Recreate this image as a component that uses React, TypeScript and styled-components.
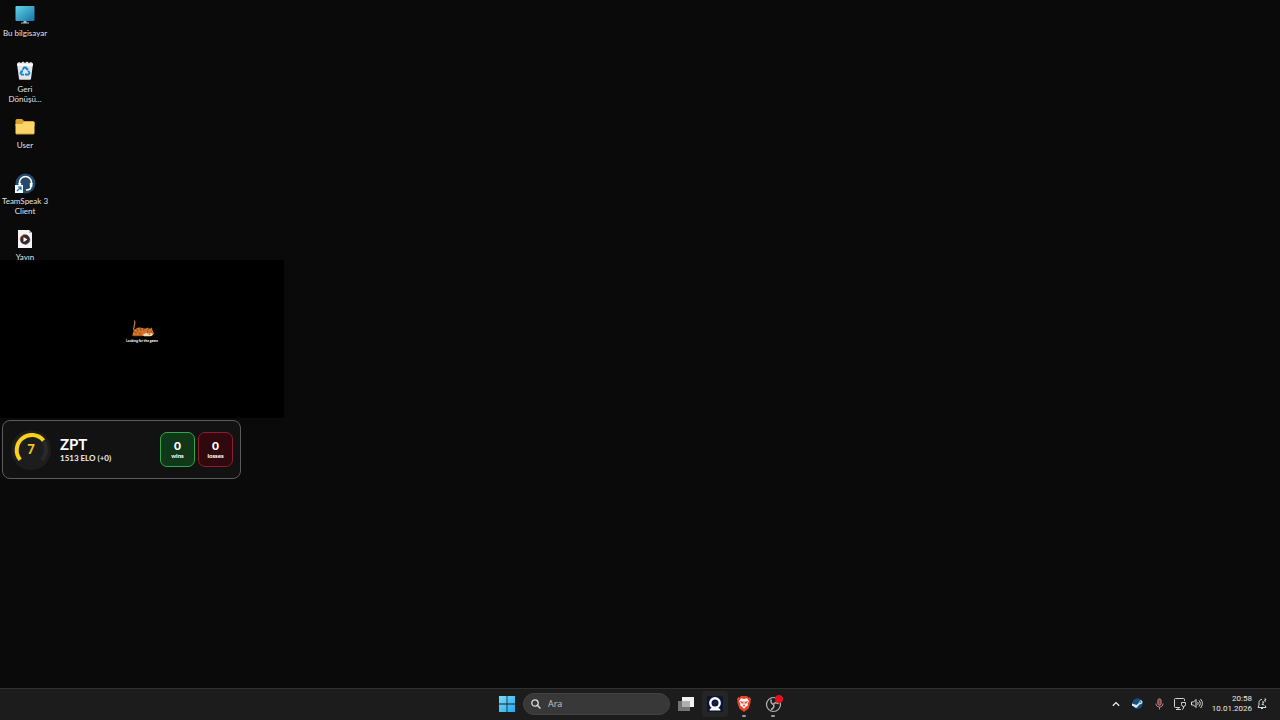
import React, { ReactNode } from "react";
import styled, { createGlobalStyle } from "styled-components";

const GlobalStyle = createGlobalStyle`
  * { box-sizing: border-box; }
  body {
    margin: 0;
    background: #0a0a0a;
    color: #fff;
    font-family: "Open Sans", "Noto Sans", sans-serif;
  }
  button { border: 0; padding: 0; margin: 0; background: none; color: inherit; font: inherit; }
  svg { display: block; }
`;

const Screen = styled.div`
  display: flex;
  flex-direction: column;
  min-height: 100vh;
`;

const Desktop = styled.main`
  position: relative;
  flex: 1;
  overflow: hidden;
`;

const ShortcutList = styled.nav`
  display: flex;
  flex-direction: column;
  width: 50px;
  padding-top: 4px;
`;

const Shortcut = styled.button`
  display: flex;
  flex-direction: column;
  align-items: center;
  gap: 4px;
  height: 56px;
  font-size: 8px;
  line-height: 10px;
  color: #e6e6e6;
  font-family: Lato, "Noto Sans", sans-serif;
`;

const ShortcutLabel = styled.span`
  width: 48px;
  text-align: center;
  text-shadow: 0 1px 1px #000;
`;

const CaptureWindow = styled.section`
  position: absolute;
  left: 0;
  top: 260px;
  width: 284px;
  height: 158px;
  display: flex;
  flex-direction: column;
  align-items: center;
  justify-content: center;
  padding-bottom: 14px;
  background: #000;
`;

const CaptureCaption = styled.p`
  margin: 0;
  font-size: 3px;
  line-height: 6px;
  font-weight: 700;
  white-space: nowrap;
`;

const RankCard = styled.section`
  position: absolute;
  left: 2px;
  top: 420px;
  width: 239px;
  height: 59px;
  display: flex;
  align-items: center;
  gap: 8px;
  padding: 0 7px;
  border: 1px solid #5c5c5c;
  border-radius: 8px;
  background: #121212;
  font-family: Lato, sans-serif;
`;

const PlayerInfo = styled.div`
  flex: 1;
  white-space: nowrap;
`;

const PlayerName = styled.h1`
  margin: 0;
  font-size: 15px;
  line-height: 16px;
  font-weight: 700;
`;

const PlayerElo = styled.p`
  margin: 0;
  font-size: 8px;
  line-height: 12px;
  font-weight: 700;
  color: #eee;
`;

const Scores = styled.div`
  display: flex;
  gap: 3px;
`;

const Score = styled.div<{ $line: string; $fill: string }>`
  display: flex;
  flex-direction: column;
  align-items: center;
  justify-content: center;
  width: 35px;
  height: 35px;
  border: 1px solid ${(p) => p.$line};
  border-radius: 7px;
  background: ${(p) => p.$fill};
  font-weight: 900;
`;

const ScoreValue = styled.span`
  font-size: 12px;
  line-height: 12px;
`;

const ScoreLabel = styled.span`
  font-size: 6px;
  line-height: 8px;
`;

const Taskbar = styled.footer`
  display: grid;
  grid-template-columns: 1fr auto 1fr;
  align-items: center;
  height: 32px;
  padding-bottom: 2px;
  border-top: 1px solid #303030;
  background: #1c1c1c;
`;

const Pinned = styled.div`
  grid-column: 2;
  display: flex;
  align-items: center;
  gap: 3px;
`;

const PinnedButton = styled.button<{ $active?: boolean; $running?: boolean }>`
  position: relative;
  display: flex;
  align-items: center;
  justify-content: center;
  width: 26px;
  height: 26px;
  border-radius: 3px;
  background: ${(p) => (p.$active ? "#252525" : "transparent")};
  &::after {
    content: "";
    display: ${(p) => (p.$running ? "block" : "none")};
    position: absolute;
    bottom: 0;
    width: 4px;
    height: 2px;
    border-radius: 1px;
    background: #9c9c9c;
  }
`;

const SearchBox = styled.label`
  display: flex;
  align-items: center;
  gap: 7px;
  width: 147px;
  height: 22px;
  padding: 0 7px;
  border: 1px solid #434343;
  border-radius: 11px;
  background: #383838;
`;

const SearchInput = styled.input`
  flex: 1;
  min-width: 0;
  padding: 0;
  border: 0;
  outline: 0;
  background: none;
  color: #d0d0d0;
  font: 9px/14px "Open Sans", sans-serif;
  &::placeholder { color: #c4c4c4; opacity: 1; }
`;

const Tray = styled.div`
  display: flex;
  align-items: center;
  justify-content: flex-end;
  padding-right: 12px;
`;

const TrayButton = styled.button<{ $width: number }>`
  display: flex;
  align-items: center;
  justify-content: center;
  width: ${(p) => p.$width}px;
  height: 26px;
`;

const Clock = styled.button`
  display: flex;
  flex-direction: column;
  align-items: flex-end;
  width: 48px;
  margin-right: 4px;
  font-family: Roboto, sans-serif;
  font-size: 8px;
  line-height: 10px;
  color: #e8e8e8;
  white-space: nowrap;
`;

const MonitorIcon = () => (
  <svg width="20" height="20" viewBox="0 0 20 20">
    <defs>
      <linearGradient id="monitor" x1="0" y1="0" x2="1" y2="1">
        <stop offset="0" stopColor="#62d3e8" />
        <stop offset="1" stopColor="#1474a9" />
      </linearGradient>
    </defs>
    <rect x=".5" y="2" width="19" height="15" rx="1" fill="url(#monitor)" />
    <path d="M8.500 17h3v1.500H14v1H6v-1h2.500z" fill="#a9bcc4" />
  </svg>
);

const RecycleIcon = () => (
  <svg width="20" height="20" viewBox="0 0 20 20">
    <path d="M2 3.500 4 2l2 1 2-1.500 2 1.500 2-1.500L14 3l2-1 2 1.500-2 15.500a1 1 0 0 1-1 .8H5a1 1 0 0 1-1-.8z" fill="#e4e7e9" />
    <path d="M2 4h16l-.3 2H2.300z" fill="#fafafa" />
    <g fill="none" stroke="#1683cd" strokeWidth="1.800">
      <path d="m7.600 9.800 1.500-2.300h1.800l1.200 1.900" />
      <path d="m13.300 10.700 1.200 2.200-1 1.800h-2.300" />
      <path d="M9 14.700H6.600l-1-1.800 1-1.700" />
    </g>
    <path d="m13.400 7.800-.3 3-2.600-1.200zM11.500 12.700v3.600l-2-1.700zM5 10.500l2.800-.2.300 2.700z" fill="#1683cd" />
  </svg>
);

const FolderIcon = () => (
  <svg width="20" height="20" viewBox="0 0 20 20">
    <path d="M.5 4.500A1.500 1.500 0 0 1 2 3h5l2 2h9a1.500 1.500 0 0 1 1.500 1.500V10H.5z" fill="#dba22d" />
    <path d="M.5 8H7l2-2h10.500v11a1.200 1.200 0 0 1-1.200 1.200H1.700A1.200 1.200 0 0 1 .5 17z" fill="#fbd568" />
    <path d="M1 17.700h18" stroke="#e6b344" />
  </svg>
);

const HeadsetIcon = () => (
  <svg width="22" height="20" viewBox="0 0 22 20" overflow="visible">
    <circle cx="11.500" cy="11.500" r="10" fill="#25496b" />
    <path d="M5.500 12v-1.500a6 6 0 0 1 12 0V12" fill="none" stroke="#fff" strokeWidth="1.600" />
    <path d="M4.500 11h2.700v4H5.500a1 1 0 0 1-1-1zM15.800 11h2.700v3a1 1 0 0 1-1 1h-1.700z" fill="#fff" />
    <path d="M17 14.500c0 2-2 3.500-5 3.500" fill="none" stroke="#fff" strokeWidth="1.500" />
    <rect x="1" y="13" width="8" height="8" fill="#f7fbff" />
    <path d="m3 19 4-4M4 15h3v3" fill="none" stroke="#1675b8" strokeWidth="1.200" />
  </svg>
);

const VideoFileIcon = () => (
  <svg width="20" height="20" viewBox="0 0 20 20">
    <path d="M3 2h11l3 3v15H3z" fill="#f5f5f5" />
    <path d="M14 2v3h3z" fill="#b8b8b8" />
    <circle cx="10" cy="11.500" r="4.900" fill="#34292f" />
    <path d="M5.100 11.500a4.900 4.900 0 0 1 4.900-4.900" fill="none" stroke="#d6643b" strokeWidth="1" />
    <path d="M10 16.400a4.900 4.900 0 0 0 4.900-4.900" fill="none" stroke="#745587" strokeWidth="1" />
    <path d="m8.500 9 4 2.500-4 2.500z" fill="#fff" />
  </svg>
);

const TigerDrawing = () => (
  <svg width="24" height="18" viewBox="0 0 24 18" overflow="visible">
    <path d="M4.500 11C1.500 7 6.500 5.500 4.500 1" fill="none" stroke="#b9784c" strokeWidth="1.300" strokeLinecap="round" />
    <path d="M2.500 16c0-4 2.500-8 6.500-8.500 3-.3 5 1.500 7 1l1.500-1 1 1h2l1.500-1 .5 3 1.500 3-2 2.500H12z" fill="#d3742a" />
    <path d="M7 9l1 2.500M10.500 8l.5 3m2.500-2.500.5 2M4.500 12l2.500 1m2 0 2 1m7-5v1.500" stroke="#70350f" strokeWidth=".7" />
    <path d="m13 14.500 3-1.500 2.500.7L21 13l2 1.500-2.500 1.700H14z" fill="#f5dcb8" />
    <path d="M17 11.800h1m2.500 0h1m-2.800 2.400h1.500" stroke="#5b2a12" strokeWidth=".8" />
    <path d="M3 15.800h9" stroke="#8a4717" strokeWidth=".8" />
  </svg>
);

const LevelGauge = () => (
  <svg width="42" height="42" viewBox="0 0 42 42" role="img" aria-label="Level 7">
    <circle cx="21" cy="21" r="20" fill="#1d1d1e" />
    <path d="M10.200 30.800A15 15 0 1 1 31.800 30.800" fill="none" stroke="#29292b" strokeWidth="4" />
    <path d="M10.200 30.800A15 15 0 0 1 33.500 11.500" fill="none" stroke="#fbd119" strokeWidth="4" />
    <text x="21" y="25" textAnchor="middle" fill="#f0c51d" fontFamily="Lato, sans-serif" fontSize="13" fontWeight="900">7</text>
  </svg>
);

const WindowsIcon = () => (
  <svg width="16" height="16" viewBox="0 0 16 16">
    <defs>
      <linearGradient id="win" x1="0" y1="0" x2="1" y2="1">
        <stop offset="0" stopColor="#79dcfa" />
        <stop offset="1" stopColor="#20a7ef" />
      </linearGradient>
    </defs>
    <path d="M0 0h7.600v7.600H0zM8.400 0H16v7.600H8.400zM0 8.400h7.600V16H0zM8.400 8.400H16V16H8.400z" fill="url(#win)" />
  </svg>
);

const SearchIcon = () => (
  <svg width="10" height="10" viewBox="0 0 10 10" fill="none" stroke="#dedede" strokeWidth="1.300">
    <circle cx="4" cy="4" r="3.200" />
    <path d="m6.300 6.300 3.200 3.200" />
  </svg>
);

const TaskViewIcon = () => (
  <svg width="16" height="16" viewBox="0 0 16 16">
    <rect x="4" y="1" width="12" height="10" fill="#f1f1f1" />
    <rect x="0" y="5" width="12" height="10" fill="#747474" />
    <path d="M4 5h8v6H4z" fill="#b0b0b0" />
  </svg>
);

const CameraAppIcon = () => (
  <svg width="16" height="16" viewBox="0 0 16 16">
    <rect width="16" height="16" rx="1" fill="#0b1535" />
    <circle cx="8" cy="7" r="4.700" fill="none" stroke="#fff" strokeWidth="2.400" />
    <path d="M2.500 14.500c0-2 2-3 5.500-3s5.500 1 5.500 3z" fill="#fff" />
    <circle cx="8" cy="7" r="2.200" fill="#172344" />
  </svg>
);

const BraveIcon = () => (
  <svg width="14" height="16" viewBox="0 0 14 16">
    <path d="M4 0h6l1.500 1.500L13 1.300l1 2-.5 1.500.2 1.200-2 6.500L7 16l-4.700-3.500L.3 6l.2-1.200L0 3.300l1-2 1.500.2z" fill="#e8432a" />
    <path d="m7 3 3-.7 2 3-1.500 2.500.3 1.700-2.300 1.500L7 13l-1.500-2-2.300-1.500.3-1.700L2 5.300l2-3z" fill="#fff" />
    <path d="m3.500 5.500 2.300.7-.6 1.300zM10.500 5.500l-2.300.7.600 1.300zM7 5.300v4m-1.300 0L7 10.300l1.300-1" stroke="#e8432a" strokeWidth=".8" fill="#e8432a" />
  </svg>
);

const ObsIcon = () => (
  <svg width="20" height="20" viewBox="0 0 20 20">
    <circle cx="10.500" cy="10.500" r="7" fill="#1d1d1d" stroke="#b4b4b4" strokeWidth="1.200" />
    <g fill="none" stroke="#b4b4b4" strokeWidth="1.500">
      <path d="M8.200 5.500c-.8 2.600.3 4.400 2.300 5" />
      <path d="M15.500 9.800c-2.100-1.500-4.200-1.400-5 .7" />
      <path d="M8 15.500c2.400-.9 3.500-2.900 2.500-5" />
    </g>
    <circle cx="16" cy="5" r="4" fill="#e6101d" />
  </svg>
);

const ChevronUpIcon = () => (
  <svg width="8" height="6" viewBox="0 0 8 6" fill="none" stroke="#eee" strokeWidth="1.300">
    <path d="m.8 4.800 3.200-3.200 3.200 3.200" />
  </svg>
);

const SteamIcon = () => (
  <svg width="11" height="11" viewBox="0 0 11 11">
    <circle cx="5.500" cy="5.500" r="5.200" fill="#174f7d" />
    <path d="M0 5.500 4.500 7l2-1.500.5-2 2-1.500 1.500 1.500-.5 2-2 .8-2 1.600-.8 1.500-1.700.4-1.500-1.300-2-.8z" fill="#d9edf8" />
    <circle cx="8.200" cy="3.900" r="1.100" fill="#4a86ad" />
  </svg>
);

const MicIcon = () => (
  <svg width="9" height="12" viewBox="0 0 9 12" fill="none" stroke="#c57f80" strokeWidth="1">
    <rect x="2.900" y=".8" width="3.200" height="6.400" rx="1.600" fill="#7b4345" />
    <path d="M1 5.500c0 2.200 1.300 3.500 3.500 3.500S8 7.700 8 5.500M4.500 9v2.500" />
  </svg>
);

const NetworkIcon = () => (
  <svg width="12" height="12" viewBox="0 0 12 12" fill="none" stroke="#d2d2d2" strokeWidth="1">
    <path d="M10.500 3V1.500a1 1 0 0 0-1-1h-8a1 1 0 0 0-1 1v7a1 1 0 0 0 1 1H6M4 9.500v2M2 11.500h5M7.500 4.500h4v2a2 2 0 0 1-4 0zM9.500 8.500v2L8 11.500" />
  </svg>
);

const VolumeIcon = () => (
  <svg width="12" height="11" viewBox="0 0 12 11" fill="none" stroke="#ddd" strokeWidth="1">
    <path d="M.5 4h2l2.500-2.500v8L2.500 7h-2zM6.500 4c.8 1 .8 2 0 3M8 2.500c1.700 2 1.700 4 0 6M9.500 1c2.500 3 2.500 6 0 9" />
  </svg>
);

const BellIcon = () => (
  <svg width="10" height="12" viewBox="0 0 10 12" fill="none" stroke="#d8d8d8" strokeWidth="1">
    <path d="M5 1.500C3 1.500 2 3 2 4.500V7L1 9.500h8L8 7.500M4 10.500h2M5 4h2L5 6.700h2M7.500 1H9L7.500 3H9" />
  </svg>
);

const shortcuts: { label: string; icon: ReactNode }[] = [
  { label: "Bu bilgisayar", icon: <MonitorIcon /> },
  { label: "Geri Dönüşü...", icon: <RecycleIcon /> },
  { label: "User", icon: <FolderIcon /> },
  { label: "TeamSpeak 3 Client", icon: <HeadsetIcon /> },
  { label: "Yayın", icon: <VideoFileIcon /> },
];

export default function App() {
  return (
    <Screen>
      <GlobalStyle />
      <Desktop>
        <ShortcutList>
          {shortcuts.map((s) => (
            <Shortcut key={s.label}>
              {s.icon}
              <ShortcutLabel>{s.label}</ShortcutLabel>
            </Shortcut>
          ))}
        </ShortcutList>

        <CaptureWindow>
          <TigerDrawing />
          <CaptureCaption>Looking for the game</CaptureCaption>
        </CaptureWindow>

        <RankCard>
          <LevelGauge />
          <PlayerInfo>
            <PlayerName>ZPT</PlayerName>
            <PlayerElo>1513 ELO (+0)</PlayerElo>
          </PlayerInfo>
          <Scores>
            <Score $line="#2fa84c" $fill="#113719">
              <ScoreValue>0</ScoreValue>
              <ScoreLabel>wins</ScoreLabel>
            </Score>
            <Score $line="#8f1c2c" $fill="#30090f">
              <ScoreValue>0</ScoreValue>
              <ScoreLabel>losses</ScoreLabel>
            </Score>
          </Scores>
        </RankCard>
      </Desktop>

      <Taskbar>
        <Pinned>
          <PinnedButton aria-label="Start"><WindowsIcon /></PinnedButton>
          <SearchBox>
            <SearchIcon />
            <SearchInput type="text" placeholder="Ara" aria-label="Ara" />
          </SearchBox>
          <PinnedButton aria-label="Task view"><TaskViewIcon /></PinnedButton>
          <PinnedButton aria-label="Camera" $active><CameraAppIcon /></PinnedButton>
          <PinnedButton aria-label="Brave" $running><BraveIcon /></PinnedButton>
          <PinnedButton aria-label="OBS Studio" $running><ObsIcon /></PinnedButton>
        </Pinned>
        <Tray>
          <TrayButton $width={20} aria-label="Hidden icons"><ChevronUpIcon /></TrayButton>
          <TrayButton $width={22} aria-label="Steam"><SteamIcon /></TrayButton>
          <TrayButton $width={22} aria-label="Microphone"><MicIcon /></TrayButton>
          <TrayButton $width={20} aria-label="Network"><NetworkIcon /></TrayButton>
          <TrayButton $width={14} aria-label="Volume"><VolumeIcon /></TrayButton>
          <Clock>
            <span>20:58</span>
            <span>10.01.2026</span>
          </Clock>
          <TrayButton $width={12} aria-label="Notifications"><BellIcon /></TrayButton>
        </Tray>
      </Taskbar>
    </Screen>
  );
}
